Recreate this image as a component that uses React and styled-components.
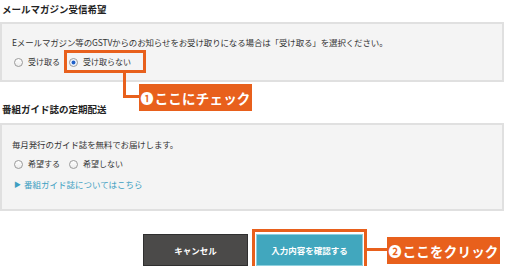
import React from "react";
import styled, {createGlobalStyle} from "styled-components";

const ORANGE = "#e8601c";

const GlobalStyle = createGlobalStyle`
    body {
        margin: 0;
        background: #ffffff;
        font-family: "Noto Sans CJK JP", "Noto Sans", sans-serif;
        color: #333333;
    }
`

export default function App() {
    return <>
        <GlobalStyle/>
        <Page>
            <SectionTitle>メールマガジン受信希望</SectionTitle>
            <Panel>
                <PanelText>Eメールマガジン等のGSTVからのお知らせをお受け取りになる場合は「受け取る」を選択ください。</PanelText>
                <RadioRow>
                    <RadioItem><Radio/>受け取る</RadioItem>
                    <RadioItem>
                        <Radio checked/>受け取らない
                        <RadioFrame/>
                        <Elbow/>
                        <CalloutOne><Num>❶</Num>ここにチェック</CalloutOne>
                    </RadioItem>
                </RadioRow>
            </Panel>

            <SectionTitle spaced>番組ガイド誌の定期配送</SectionTitle>
            <Panel tall>
                <PanelText>毎月発行のガイド誌を無料でお届けします。</PanelText>
                <RadioRow>
                    <RadioItem><Radio/>希望する</RadioItem>
                    <RadioItem><Radio/>希望しない</RadioItem>
                </RadioRow>
                <GuideLink><Arrow>▶</Arrow>番組ガイド誌についてはこちら</GuideLink>
            </Panel>

            <ButtonRow>
                <Button dark>キャンセル</Button>
                <ConfirmWrap>
                    <Button>入力内容を確認する</Button>
                    <ButtonFrame/>
                    <Connector/>
                    <CalloutTwo><Num>❷</Num>ここをクリック</CalloutTwo>
                </ConfirmWrap>
            </ButtonRow>
        </Page>
    </>
}

const Page = styled.div`
    width: 504px;
    padding-top: 2px;
`

const SectionTitle = styled.div`
    font-size: 9.5px;
    font-weight: bold;
    color: #222222;
    line-height: 14px;
    padding-left: 2px;
    margin-top: ${props => props.spaced ? "20px" : "0"};
`

const Panel = styled.div`
    margin-top: ${props => props.tall ? "7px" : "6px"};
    background: #f4f4f4;
    border: 2px solid #e0e0e0;
    padding: ${props => props.tall ? "12px 10px 18px" : "11px 10px 11px"};
    display: flex;
    flex-direction: column;
    gap: 6px;
`

const PanelText = styled.div`
    font-size: 8.5px;
    line-height: 14px;
    letter-spacing: -0.15px;
    color: #333333;
`

const RadioRow = styled.div`
    display: flex;
    gap: 9px;
    padding-left: 2px;
    height: 14px;
    align-items: center;
`

const RadioItem = styled.label`
    position: relative;
    display: inline-flex;
    align-items: center;
    gap: 5px;
    font-size: 8px;
    line-height: 14px;
    color: #333333;
`

const Radio = styled.span`
    display: inline-block;
    box-sizing: border-box;
    width: 9px;
    height: 9px;
    border-radius: 50%;
    border: 1px solid #9a9a9a;
    background: ${props => props.checked
        ? "radial-gradient(circle, #1f5fc8 0 1.6px, #cfe0f7 2.2px, #ffffff 3.5px)"
        : "linear-gradient(#ffffff, #ececec)"};
`

const RadioFrame = styled.span`
    position: absolute;
    left: -5px;
    top: -5px;
    width: 82px;
    height: 23px;
    box-sizing: border-box;
    border: 3px solid ${ORANGE};
`

const Elbow = styled.span`
    position: absolute;
    left: 54px;
    top: 18px;
    width: 16px;
    height: 25px;
    box-sizing: border-box;
    border-left: 3px solid ${ORANGE};
    border-bottom: 3px solid ${ORANGE};
`

const Callout = styled.div`
    position: absolute;
    width: 113px;
    height: 27px;
    background: ${ORANGE};
    color: #ffffff;
    font-size: 13.5px;
    font-weight: bold;
    display: flex;
    align-items: center;
    justify-content: center;
    letter-spacing: 0.2px;
    white-space: nowrap;
`

const CalloutOne = styled(Callout)`
    left: 70px;
    top: 29px;
`

const CalloutTwo = styled(Callout)`
    left: 131px;
    top: 3px;
`

const Num = styled.span`
    font-size: 13px;
    margin-right: 1px;
`

const GuideLink = styled.a`
    font-size: 8.5px;
    line-height: 14px;
    color: #3d9fc2;
    text-decoration: none;
    display: flex;
    align-items: center;
    padding-left: 2px;
`

const Arrow = styled.span`
    font-size: 7px;
    margin-right: 3px;
`

const ButtonRow = styled.div`
    display: flex;
    justify-content: center;
    gap: 8px;
    margin-top: 23px;
    padding-left: 2px;
`

const ConfirmWrap = styled.div`
    position: relative;
`

const Button = styled.button`
    width: ${props => props.dark ? "105px" : "107px"};
    height: 32px;
    box-sizing: border-box;
    font-family: "Noto Sans CJK JP", "Noto Sans", sans-serif;
    font-size: 8.5px;
    font-weight: bold;
    color: #ffffff;
    background: ${props => props.dark ? "#4b4a49" : "#41a7be"};
    border: 1px solid ${props => props.dark ? "#2f2f2f" : "#8fd0de"};
    padding: 0;
`

const ButtonFrame = styled.span`
    position: absolute;
    left: -4px;
    top: -5px;
    width: 115px;
    height: 43px;
    box-sizing: border-box;
    border: 3px solid ${ORANGE};
`

const Connector = styled.span`
    position: absolute;
    left: 111px;
    top: 14px;
    width: 20px;
    height: 3px;
    background: ${ORANGE};
`
